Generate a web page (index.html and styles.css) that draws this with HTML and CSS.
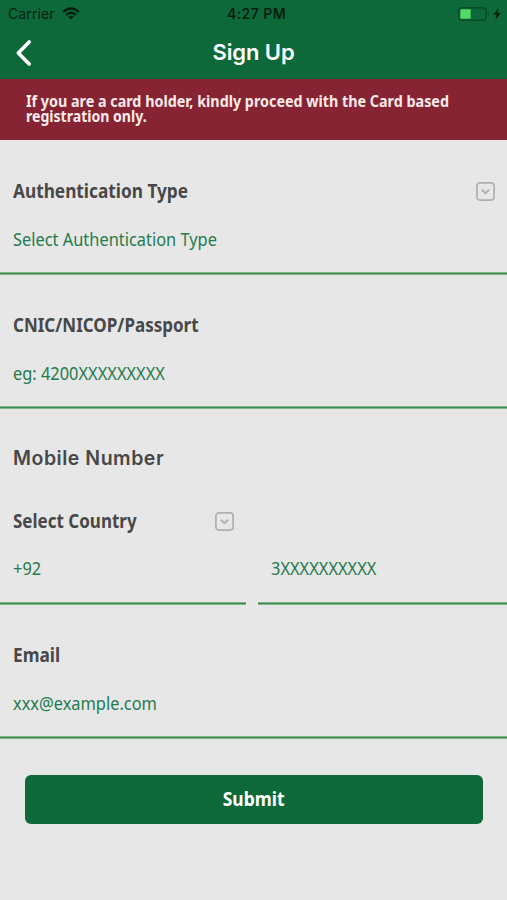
FILE: index.html
```html
<!DOCTYPE html>
<html lang="en">
<head>
<meta charset="utf-8">
<title>Sign Up</title>
<link rel="stylesheet" href="styles.css">
</head>
<body>
<header class="top">
  <div class="status">
    <div class="carrier"><span>Carrier</span>
      <svg width="18" height="13" viewBox="0 0 18 13" fill="none" stroke="#041f10" stroke-width="2.3"><path d="M1.2 5Q9 -2 16.8 5M4 8Q9 3.6 14 8"/><path d="M9 12.5L6.2 9.7Q9 7.6 11.8 9.7Z" fill="#041f10" stroke="none"/></svg>
    </div>
    <div class="clock">4:27 PM</div>
    <div class="power">
      <svg width="44" height="14" viewBox="0 0 44 14"><rect x=".75" y=".75" width="27.5" height="12.5" rx="3.2" fill="none" stroke="#074a26" stroke-width="1.4"/><rect x="2.3" y="2.3" width="10.4" height="9.4" rx="1" fill="#4fdb65"/><path d="M30 5Q32 7 30 9Z" fill="#074a26"/><path d="M40.6 1L35.3 7.8H38.6L37.4 13L42.7 6H39.5Z" fill="#041f10"/></svg>
    </div>
  </div>
  <nav class="nav">
    <svg class="back" width="18" height="28" viewBox="0 0 18 28" fill="none" stroke="#fff" stroke-width="3.6" stroke-linecap="round" stroke-linejoin="round"><path d="M14.2 3L3.3 14L14.2 25"/></svg>
    <h1 class="title">Sign Up</h1>
  </nav>
</header>
<p class="notice"><span class="line">If you are a card holder, kindly proceed with the Card based</span><span class="line short">registration only.</span></p>
<main>
  <section class="field first">
    <div class="head"><label class="label wide">Authentication Type</label><svg class="drop" width="19" height="19" viewBox="0 0 19 19" fill="none" stroke="#b0b0b0" stroke-width="1.7"><rect x=".9" y=".9" width="17.2" height="17.2" rx="3"/><path d="M5.8 7.8L9.5 11.2L13.2 7.8" stroke-width="2"/></svg></div>
    <div class="value">Select Authentication Type</div>
  </section>
  <section class="field">
    <div class="head"><label class="label">CNIC/NICOP/Passport</label></div>
    <div class="value">eg: 4200XXXXXXXXX</div>
  </section>
  <h2 class="group">Mobile Number</h2>
  <div class="pair">
    <section class="field country">
      <div class="head"><label class="label">Select Country</label><svg class="drop" width="19" height="19" viewBox="0 0 19 19" fill="none" stroke="#b0b0b0" stroke-width="1.7"><rect x=".9" y=".9" width="17.2" height="17.2" rx="3"/><path d="M5.8 7.8L9.5 11.2L13.2 7.8" stroke-width="2"/></svg></div>
      <div class="value">+92</div>
    </section>
    <section class="field number">
      <div class="value">3XXXXXXXXXX</div>
    </section>
  </div>
  <section class="field">
    <div class="head"><label class="label wide">Email</label></div>
    <div class="value">xxx@example.com</div>
  </section>
  <button class="submit"><span class="caption">Submit</span></button>
</main>
</body>
</html>
```
FILE: styles.css
```css
* { box-sizing: border-box; }
body { margin: 0; min-height: 900px; background: #e7e7e7; color: #484848; font-family: "Noto Sans", sans-serif; }
.top { height: 79px; background: #0d693a; }
.status { height: 27px; padding: 0 5px 0 8px; display: grid; grid-template-columns: 1fr auto 1fr; align-items: center; font: 14px/27px Inter, sans-serif; color: #041f10; }
.carrier { display: flex; align-items: center; gap: 7px; letter-spacing: .1px; }
.clock { padding-left: 3px; font-weight: 600; letter-spacing: .45px; }
.power { display: flex; justify-content: flex-end; }
.nav { height: 52px; padding: 0 15px; display: grid; grid-template-columns: 18px 1fr 18px; align-items: center; }
.title { margin: 0; padding-bottom: 2px; text-align: center; color: #fff; font: 600 22px/48px Inter, sans-serif; letter-spacing: -.1px; }
.notice { margin: 0; height: 61px; padding: 15px 26px 0; background: #872433; color: #fdebea; font-size: 15.5px; font-weight: 700; line-height: 14.5px; }
.line { display: block; width: max-content; white-space: nowrap; transform: scaleX(.924); transform-origin: left; }
.line.short { transform: scaleX(.908); }
.field { height: 134.7px; padding: 37.4px 12px 0 13px; background: linear-gradient(#7fb48a 0 .7px, #3c8c4e .7px 2.3px, #7fb48a 2.3px) bottom / 100% 3px no-repeat; }
.first { padding-top: 38px; }
.head { height: 27px; display: flex; justify-content: space-between; align-items: center; }
.label { font-size: 19px; font-weight: 700; line-height: 27px; transform: scaleX(.895); transform-origin: left; }
.label.wide { transform: scaleX(.908); }
.value { width: max-content; margin-top: 20px; font-size: 18.5px; line-height: 27px; color: #247b4d; white-space: nowrap; transform: scaleX(.886); transform-origin: left; }
.group { margin: 0; height: 60.5px; padding: 34px 13px 0; font: 600 19.5px/30px Inter, sans-serif; letter-spacing: .52px; }
.pair { display: flex; gap: 12px; }
.country { width: 246px; padding-top: 38.2px; }
.country .value { margin-top: 19.2px; }
.number { flex: 1; padding-top: 84.4px; }
.number .value { margin: 0; }
.submit { display: block; width: 458px; height: 49px; margin: 36px 0 0 25px; padding: 0 0 2px; border: 0; border-radius: 6px; background: #0d693a; color: #fff; font: inherit; font-size: 19px; font-weight: 700; }
.caption { display: inline-block; transform: scaleX(.92); }
```
